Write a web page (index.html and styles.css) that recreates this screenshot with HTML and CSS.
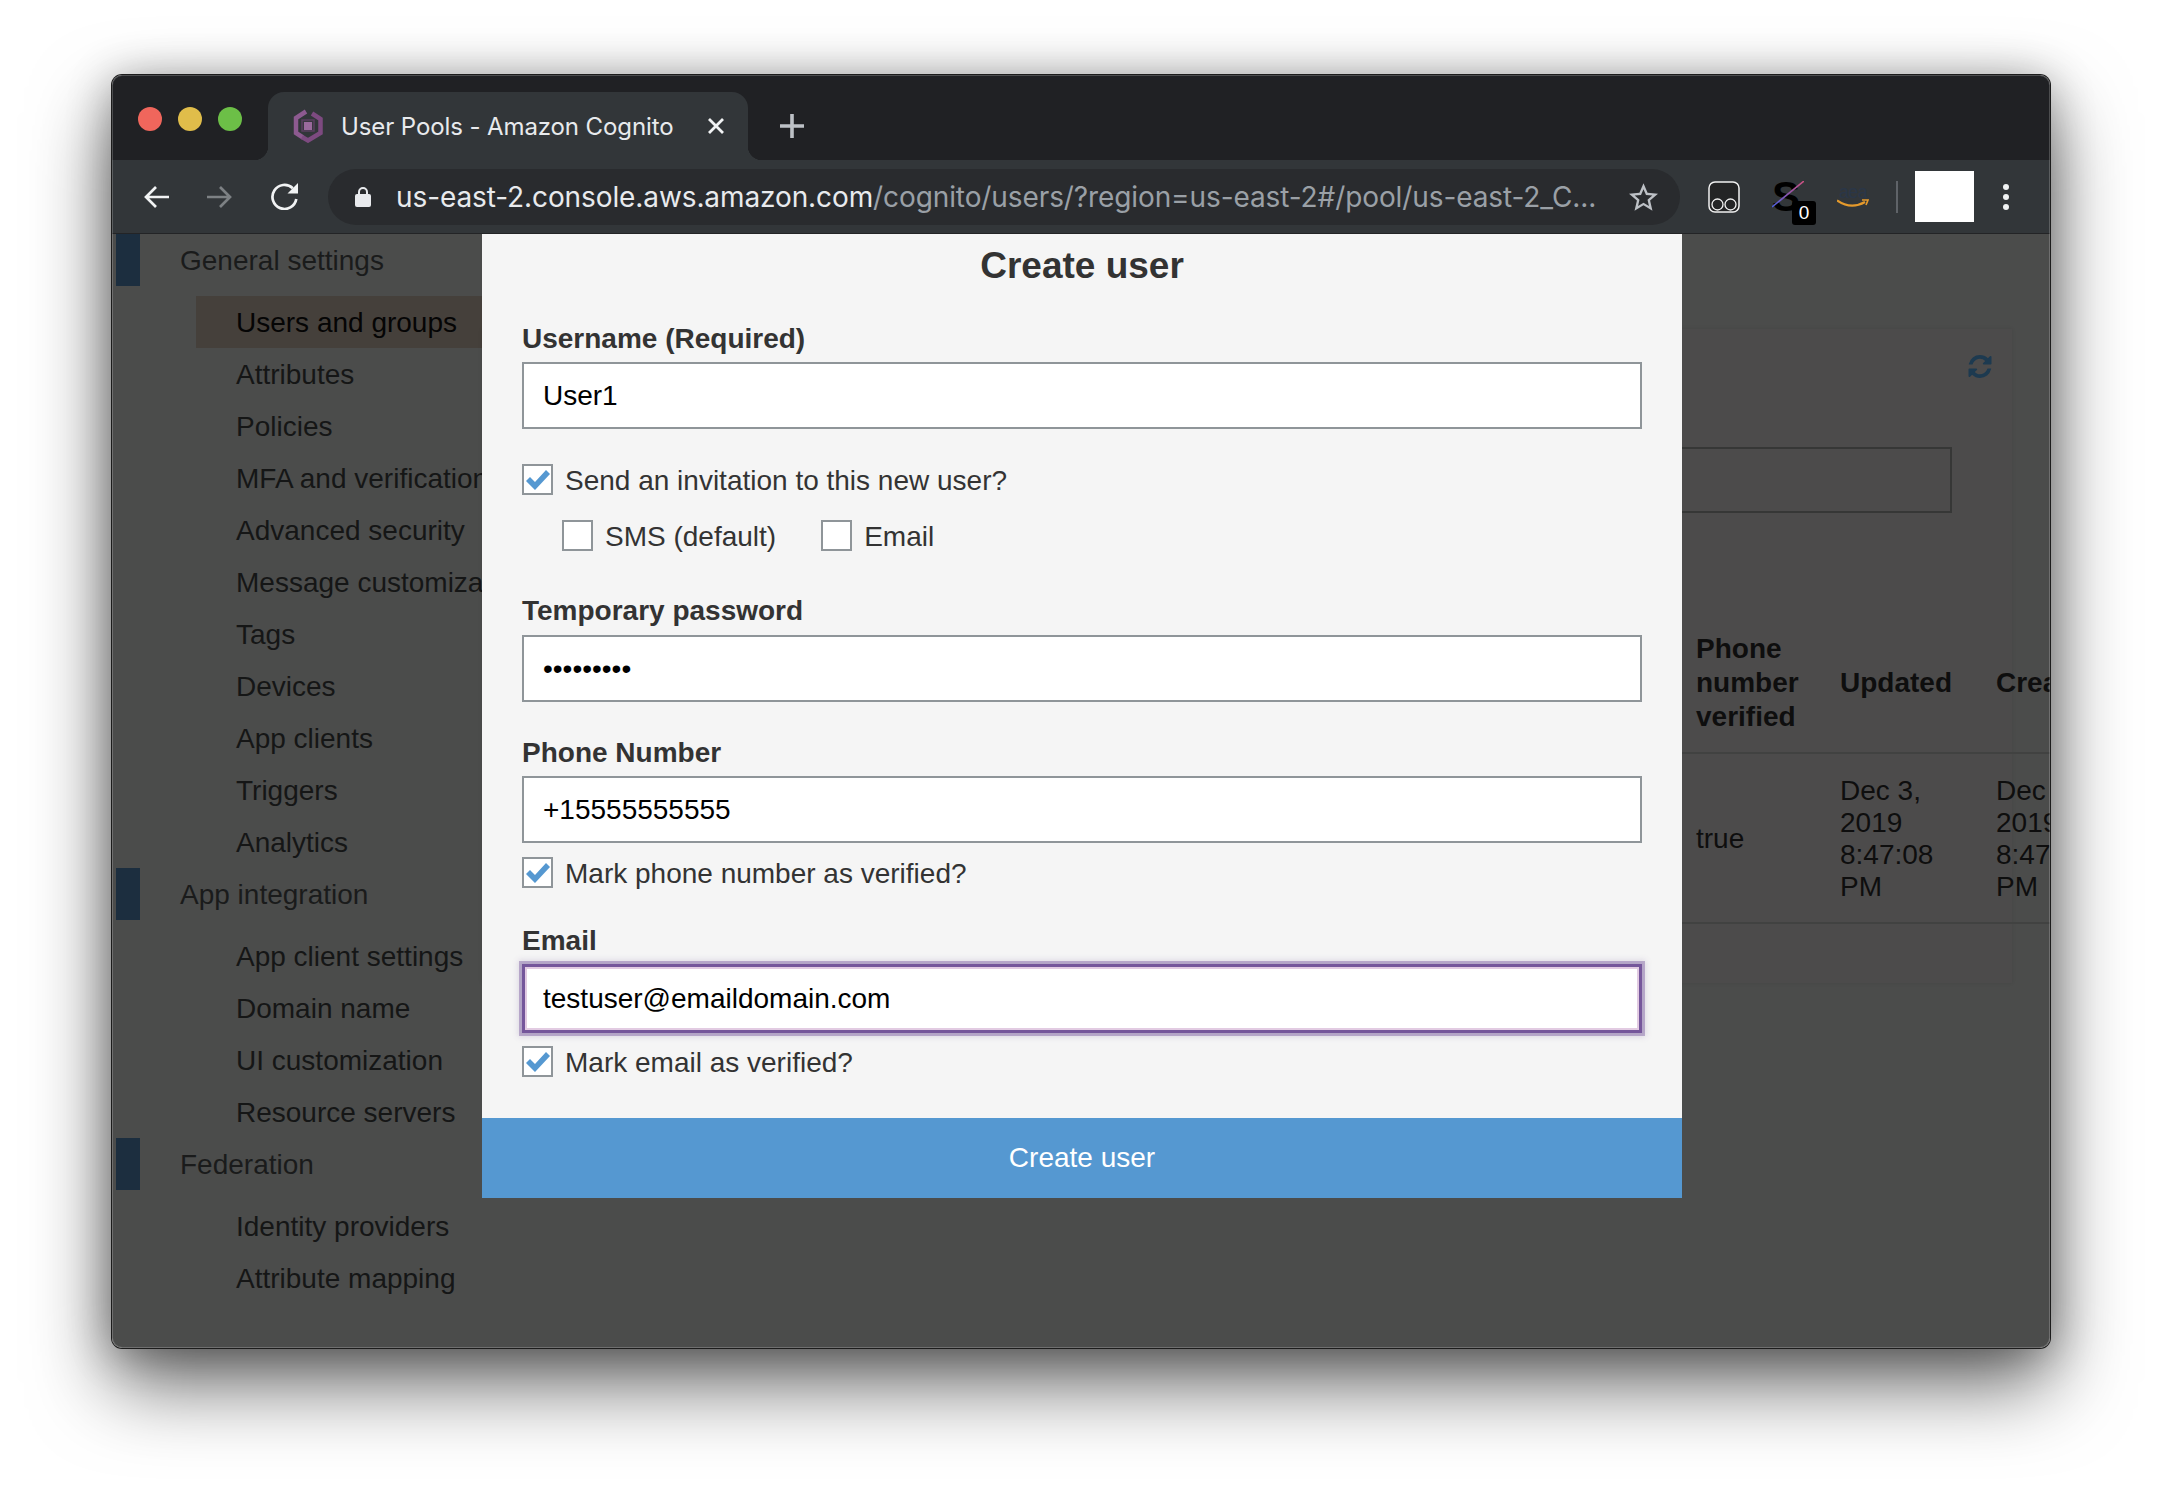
FILE: index.html
```html
<!DOCTYPE html>
<html lang="en">
<head>
    <meta charset="UTF-8">
    <meta name="viewport" content="width=device-width, initial-scale=1.0">
    <title>User Pools - Amazon Cognito</title>
    <link rel="stylesheet" href="styles.css">
</head>
<body>
    <div class="window">
        <div class="titlebar">
            <div class="lights">
                <span class="light red"></span>
                <span class="light yellow"></span>
                <span class="light green"></span>
            </div>
            <div class="tab">
                <svg class="favicon" viewBox="0 0 30 34">
                    <path d="M13 2.5 L3 9 V24 L10 28.5" fill="none" stroke="#8d5a90" stroke-width="4.5"/>
                    <path d="M19 4.5 L27.5 10 V24 L15 31.5 L9 28" fill="none" stroke="#7d4a80" stroke-width="4.5"/>
                    <path d="M9 11 H21 V22 H9z" fill="#3a3740" stroke="#5a3f5f" stroke-width="1.5"/>
                    <rect x="11" y="13" width="8" height="8" fill="#9a6a9c"/>
                </svg>
                <span class="tab-title">User Pools - Amazon Cognito</span>
                <svg class="tab-close" viewBox="0 0 18 18"><path d="M2 2 L16 16 M16 2 L2 16"/></svg>
            </div>
            <svg class="new-tab" viewBox="0 0 24 24"><path d="M12 0 V24 M0 12 H24"/></svg>
        </div>

        <div class="toolbar">
            <svg class="nav-icon" viewBox="0 0 26 24"><path d="M26 12 H3 M13 2 L3 12 L13 22"/></svg>
            <svg class="nav-icon forward" viewBox="0 0 26 24"><path d="M0 12 H23 M13 2 L23 12 L13 22"/></svg>
            <svg class="reload" viewBox="0 0 27 27">
                <path d="M21.8 5.3 A12 12 0 1 0 25.3 16" fill="none" stroke="#f1f3f4" stroke-width="2.7"/>
                <path d="M27 0 V10.5 H16.5z" fill="#f1f3f4"/>
            </svg>
            <div class="omnibox">
                <svg class="lock" viewBox="0 0 16 21">
                    <path d="M4 9 V6 a4 4 0 0 1 8 0 V9" fill="none" stroke="#e8eaed" stroke-width="2"/>
                    <rect y="8" width="16" height="13" rx="2" fill="#e8eaed"/>
                </svg>
                <span class="url"><span class="host">us-east-2.console.aws.amazon.com</span>/cognito/users/?region=us-east-2#/pool/us-east-2_C...</span>
                <svg class="star" viewBox="2 2 20 19"><path d="M22 9.24l-7.19-.62L12 2 9.19 8.63 2 9.24l5.46 4.73L5.82 21 12 17.27 18.18 21l-1.63-7.03L22 9.24zM12 15.4l-3.76 2.27 1-4.28-3.32-2.88 4.38-.38L12 6.1l1.71 4.04 4.38.38-3.32 2.88 1 4.28L12 15.4z"/></svg>
            </div>
            <svg class="ext-glasses" viewBox="0 0 32 32">
                <rect x="1" y="1" width="30" height="30" rx="6" fill="#232425" stroke="#f1f1f1" stroke-width="1.5"/>
                <circle cx="9.5" cy="23.5" r="5.5" fill="none" stroke="#f1f1f1" stroke-width="1.3"/>
                <circle cx="22.5" cy="23.5" r="5.5" fill="none" stroke="#f1f1f1" stroke-width="1.3"/>
            </svg>
            <div class="ext-s">
                <span class="ext-s-letter">S</span>
                <svg class="ext-s-line" viewBox="0 0 32 32">
                    <defs>
                        <linearGradient id="slash" x1="0" y1="1" x2="1" y2="0">
                            <stop offset="0" stop-color="#4a5ee0"/>
                            <stop offset="1" stop-color="#d0517f"/>
                        </linearGradient>
                    </defs>
                    <path d="M0 26 L32 0" stroke="url(#slash)" stroke-width="1.6"/>
                </svg>
                <span class="ext-badge">0</span>
            </div>
            <div class="ext-amazon">
                <span class="ext-amazon-text">aea</span>
                <svg class="ext-smile" viewBox="0 0 32 9">
                    <path d="M0 1.5 Q14 11 28 3" fill="none" stroke="#e59a2c" stroke-width="2.2"/>
                    <path d="M25 1 L31 1 L29 6" fill="none" stroke="#e59a2c" stroke-width="1.6"/>
                </svg>
            </div>
            <span class="toolbar-divider"></span>
            <span class="avatar"></span>
            <div class="menu-dots"><span></span><span></span><span></span></div>
        </div>

        <div class="content">
            <aside class="sidebar">
                <div class="nav-head">General settings</div>
                <ul class="nav-list">
                    <li class="active">Users and groups</li>
                    <li>Attributes</li>
                    <li>Policies</li>
                    <li>MFA and verification</li>
                    <li>Advanced security</li>
                    <li>Message customizations</li>
                    <li>Tags</li>
                    <li>Devices</li>
                    <li>App clients</li>
                    <li>Triggers</li>
                    <li>Analytics</li>
                </ul>
                <div class="nav-head">App integration</div>
                <ul class="nav-list">
                    <li>App client settings</li>
                    <li>Domain name</li>
                    <li>UI customization</li>
                    <li>Resource servers</li>
                </ul>
                <div class="nav-head">Federation</div>
                <ul class="nav-list">
                    <li>Identity providers</li>
                    <li>Attribute mapping</li>
                </ul>
            </aside>

            <main class="main">
                <section class="panel">
                    <svg class="refresh" viewBox="0 0 1536 1536"><path d="M1511 928q0 5-1 7-64 268-268 434.5t-478 166.5q-146 0-282.5-55t-243.5-157l-129 129q-19 19-45 19t-45-19-19-45v-448q0-26 19-45t45-19h448q26 0 45 19t19 45-19 45l-137 137q71 66 161 102t187 36q134 0 250-65t186-179q11-17 53-117 8-23 30-23h192q13 0 22.5 9.5t9.5 22.5zm25-800v448q0 26-19 45t-45 19h-448q-26 0-45-19t-19-45 19-45l138-138q-148-137-349-137-134 0-250 65t-186 179q-11 17-53 117-8 23-30 23h-199q-13 0-22.5-9.5t-9.5-22.5v-7q65-268 270-434.5t480-166.5q146 0 284 55.5t245 156.5l130-129q19-19 45-19t45 19 19 45z"/></svg>
                    <div class="search-box"></div>
                    <table class="users-table">
                        <tr>
                            <th class="col-hidden"></th>
                            <th class="col-phone">Phone number verified</th>
                            <th class="col-updated">Updated</th>
                            <th class="col-created">Created</th>
                        </tr>
                        <tr>
                            <td></td>
                            <td>true</td>
                            <td>Dec 3,<br>2019<br>8:47:08<br>PM</td>
                            <td>Dec 3,<br>2019<br>8:47:08<br>PM</td>
                        </tr>
                    </table>
                </section>
            </main>

            <form class="modal">
                <h2 class="modal-title">Create user</h2>
                <div class="modal-body">
                    <label class="field-label first">Username (Required)</label>
                    <input class="field-input" type="text" value="User1" readonly>

                    <div class="check-row invite">
                        <span class="check on"><svg viewBox="0 0 24 20"><path d="M0 11 L4 7 L9 12 L20 0 L24 4 L9 20z"/></svg></span>
                        <span class="check-text">Send an invitation to this new user?</span>
                    </div>
                    <div class="option-row">
                        <div class="check-row">
                            <span class="check"></span>
                            <span class="check-text">SMS (default)</span>
                        </div>
                        <div class="check-row">
                            <span class="check"></span>
                            <span class="check-text">Email</span>
                        </div>
                    </div>

                    <label class="field-label temp">Temporary password</label>
                    <input class="field-input" type="password" value="password1" readonly>

                    <label class="field-label phone">Phone Number</label>
                    <input class="field-input" type="text" value="+15555555555" readonly>
                    <div class="check-row verify">
                        <span class="check on"><svg viewBox="0 0 24 20"><path d="M0 11 L4 7 L9 12 L20 0 L24 4 L9 20z"/></svg></span>
                        <span class="check-text">Mark phone number as verified?</span>
                    </div>

                    <label class="field-label email">Email</label>
                    <input class="field-input focused" type="text" value="testuser@emaildomain.com" readonly>
                    <div class="check-row verify tight">
                        <span class="check on"><svg viewBox="0 0 24 20"><path d="M0 11 L4 7 L9 12 L20 0 L24 4 L9 20z"/></svg></span>
                        <span class="check-text">Mark email as verified?</span>
                    </div>
                </div>
                <button class="submit" type="button">Create user</button>
            </form>
        </div>
    </div>
</body>
</html>
```

FILE: styles.css
```css
html, body {
    margin: 0;
    height: 1496px;
    overflow: hidden;
    background-color: #fff;
}
body {
    padding: 75px 0 0 112px;
    box-sizing: border-box;
    font-family: "Liberation Sans", Arial, sans-serif;
    font-size: 28px;
    color: #333;
}

/* browser window */
.window {
    position: relative;
    display: flex;
    flex-direction: column;
    width: 1938px;
    height: 1273px;
    border-radius: 10px;
    box-shadow: 0 0 0 1px #1c1c1c, 0 36px 80px rgba(0, 0, 0, 0.6), 0 4px 44px rgba(0, 0, 0, 0.3);
}
.window::after {
    content: "";
    position: absolute;
    inset: 0;
    border-radius: 10px;
    box-shadow: inset 0 0 0 1px rgba(255, 255, 255, 0.2);
    pointer-events: none;
}

.titlebar {
    display: flex;
    flex: none;
    height: 85px;
    padding-left: 26px;
    box-sizing: border-box;
    background-color: #202124;
    border-radius: 10px 10px 0 0;
}
.lights {
    display: flex;
    gap: 16px;
    margin-top: 32px;
}
.light {
    width: 24px;
    height: 24px;
    border-radius: 50%;
}
.red { background-color: #f0665c; }
.yellow { background-color: #e0bd4a; }
.green { background-color: #6cbf47; }

.tab {
    position: relative;
    display: flex;
    align-items: center;
    width: 480px;
    height: 68px;
    margin: 17px 0 0 26px;
    padding: 0 23px 0 25px;
    box-sizing: border-box;
    background-color: #323639;
    border-radius: 16px 16px 0 0;
}
.tab::before, .tab::after {
    content: "";
    position: absolute;
    bottom: 0;
    width: 14px;
    height: 14px;
}
.tab::before {
    left: -14px;
    background: radial-gradient(circle at 0 0, #202124 14px, #323639 14.5px);
}
.tab::after {
    right: -14px;
    background: radial-gradient(circle at 100% 0, #202124 14px, #323639 14.5px);
}
.favicon {
    flex: none;
    width: 30px;
    height: 34px;
    margin-right: 18px;
}
.tab-title {
    flex: 1;
    font-family: Inter, sans-serif;
    font-size: 24px;
    letter-spacing: -0.1px;
    color: #e8eaed;
    white-space: nowrap;
}
.tab-close {
    flex: none;
    width: 18px;
    height: 18px;
    fill: none;
    stroke: #f1f3f4;
    stroke-width: 2.8;
}
.new-tab {
    width: 24px;
    height: 24px;
    margin: 39px 0 0 32px;
    fill: none;
    stroke: #bdc1c6;
    stroke-width: 3.6;
}

/* toolbar */
.toolbar {
    display: flex;
    flex: none;
    align-items: center;
    height: 74px;
    padding-left: 31px;
    box-sizing: border-box;
    background-color: #323639;
    border-bottom: 1px solid #232426;
}
.nav-icon {
    flex: none;
    width: 26px;
    height: 24px;
    fill: none;
    stroke: #f1f3f4;
    stroke-width: 2.7;
}
.nav-icon.forward {
    margin-left: 38px;
    stroke: #7d8184;
}
.reload {
    flex: none;
    width: 27px;
    height: 27px;
    margin-left: 38px;
}
.omnibox {
    display: flex;
    flex: none;
    align-items: center;
    width: 1352px;
    height: 56px;
    margin-left: 30px;
    padding: 0 22px 0 27px;
    box-sizing: border-box;
    background-color: #292b2e;
    border-radius: 28px;
}
.lock {
    flex: none;
    width: 16px;
    height: 21px;
    margin-right: 25px;
}
.url {
    flex: 1;
    font-family: Inter, sans-serif;
    font-size: 28px;
    letter-spacing: -0.1px;
    color: #9aa0a6;
    white-space: nowrap;
}
.host { color: #e8eaed; }
.star {
    flex: none;
    width: 29px;
    height: 28px;
    fill: #bdc1c6;
}
.ext-glasses {
    flex: none;
    width: 32px;
    height: 32px;
    margin-left: 28px;
}
.ext-s {
    position: relative;
    flex: none;
    width: 32px;
    height: 32px;
    margin-left: 32px;
}
.ext-s-letter {
    display: block;
    font-size: 42px;
    font-weight: bold;
    line-height: 32px;
    color: #000;
}
.ext-s-line {
    position: absolute;
    inset: 0;
}
.ext-badge {
    position: absolute;
    left: 20px;
    top: 20px;
    width: 24px;
    height: 24px;
    background-color: #000;
    border-radius: 3px;
    color: #fff;
    font-size: 19px;
    line-height: 24px;
    text-align: center;
}
.ext-amazon {
    display: flex;
    flex: none;
    flex-direction: column;
    align-items: center;
    width: 32px;
    margin-left: 33px;
}
.ext-amazon-text {
    font-size: 18px;
    letter-spacing: -0.6px;
    line-height: 14px;
    color: #2a3648;
}
.ext-smile {
    width: 32px;
    height: 9px;
}
.toolbar-divider {
    flex: none;
    width: 2px;
    height: 32px;
    margin-left: 27px;
    background-color: #5f6368;
}
.avatar {
    flex: none;
    width: 59px;
    height: 51px;
    margin-left: 17px;
    background-color: #fff;
}
.menu-dots {
    display: flex;
    flex: none;
    flex-direction: column;
    gap: 4px;
    margin-left: 29px;
}
.menu-dots span {
    width: 6px;
    height: 6px;
    background-color: #f1f3f4;
    border-radius: 50%;
}

/* dimmed page */
.content {
    position: relative;
    display: flex;
    flex: 1;
    overflow: hidden;
    background-color: #4b4c4b;
    border-radius: 0 0 10px 10px;
    color: #151616;
}
.sidebar {
    flex: none;
    width: 370px;
    overflow: hidden;
    white-space: nowrap;
}
.nav-head {
    height: 52px;
    margin-left: 4px;
    padding-left: 40px;
    border-left: 24px solid #1c2e3f;
    line-height: 53px;
    color: #1a1b1b;
}
.nav-list {
    list-style: none;
    margin: 10px 0 0 84px;
    padding: 0;
}
.nav-list li {
    height: 52px;
    padding-left: 40px;
    line-height: 53px;
}
.nav-list .active {
    background-color: #45403b;
    color: #050505;
}

.main {
    flex: 1;
    min-width: 0;
    padding-top: 95px;
}
.panel {
    display: flex;
    flex-direction: column;
    width: 1530px;
    height: 654px;
    background-color: #4c4b4b;
    box-shadow: 0 0 4px rgba(0, 0, 0, 0.1);
}
.refresh {
    align-self: flex-end;
    flex: none;
    width: 24px;
    height: 23px;
    margin: 26px 20px 0 0;
    fill: #1d3a50;
}
.search-box {
    flex: none;
    width: 1470px;
    height: 66px;
    margin-top: 69px;
    box-sizing: border-box;
    border: 2px solid #363736;
}
.users-table {
    flex: none;
    width: 1715px;
    margin-top: 118px;
    border-collapse: collapse;
    table-layout: fixed;
    color: #0e0e0e;
}
.users-table th, .users-table td {
    box-sizing: border-box;
    border-bottom: 2px solid #414241;
}
.users-table th {
    padding: 1px 20px 18px 0;
    font-size: 28px;
    line-height: 34px;
    text-align: left;
    vertical-align: middle;
}
.users-table td {
    padding: 21px 20px 19px 0;
    line-height: 32px;
}
.col-hidden { width: 1214px; }
.col-phone { width: 144px; }
.col-updated { width: 156px; }
.col-created { width: 201px; }

/* create user dialog */
.modal {
    position: absolute;
    left: 370px;
    top: 0;
    width: 1200px;
    margin: 0;
    background-color: #f5f5f5;
    color: #333;
}
.modal-title {
    margin: 0;
    font-size: 37px;
    line-height: 63px;
    text-align: center;
}
.modal-body {
    padding: 0 40px;
}
.field-label {
    display: block;
    margin-bottom: 6px;
    font-weight: bold;
    line-height: 34px;
}
.field-label.first { margin-top: 25px; }
.field-label.temp { margin: 43px 0 7px; }
.field-label.phone { margin-top: 34px; }
.field-label.email { margin: 36px 0 6px; }
.field-input {
    display: block;
    width: 100%;
    height: 67px;
    padding: 1px 19px 0;
    box-sizing: border-box;
    background-color: #fff;
    border: 2px solid #8f9599;
    border-radius: 0;
    outline: none;
    font-family: "Liberation Sans", Arial, sans-serif;
    font-size: 28px;
    color: #000;
}
.field-input.focused {
    height: 69px;
    padding-left: 18px;
    border: 3px solid #75569b;
    box-shadow: 0 0 0 3px rgba(117, 86, 155, 0.42), 0 0 6px 4px rgba(117, 86, 155, 0.18), inset 0 0 0 2px #e2cbe2;
}
.check-row {
    display: flex;
    align-items: center;
    gap: 12px;
    height: 31px;
}
.check-text { padding-top: 2px; }
.check-row.invite { margin-top: 35px; }
.check-row.verify { margin-top: 14px; }
.check-row.verify.tight { margin-top: 13px; }
.option-row {
    display: flex;
    gap: 45px;
    margin: 25px 0 0 40px;
}
.check {
    display: flex;
    flex: none;
    align-items: center;
    justify-content: center;
    width: 31px;
    height: 31px;
    box-sizing: border-box;
    background-color: #fff;
    border: 2px solid #8f9599;
}
.check svg {
    width: 24px;
    height: 20px;
    fill: #5598d1;
}
.submit {
    display: block;
    width: 100%;
    height: 80px;
    margin-top: 41px;
    background-color: #5598d1;
    border: none;
    font-family: "Liberation Sans", Arial, sans-serif;
    font-size: 28px;
    color: #fff;
    cursor: pointer;
}
```
